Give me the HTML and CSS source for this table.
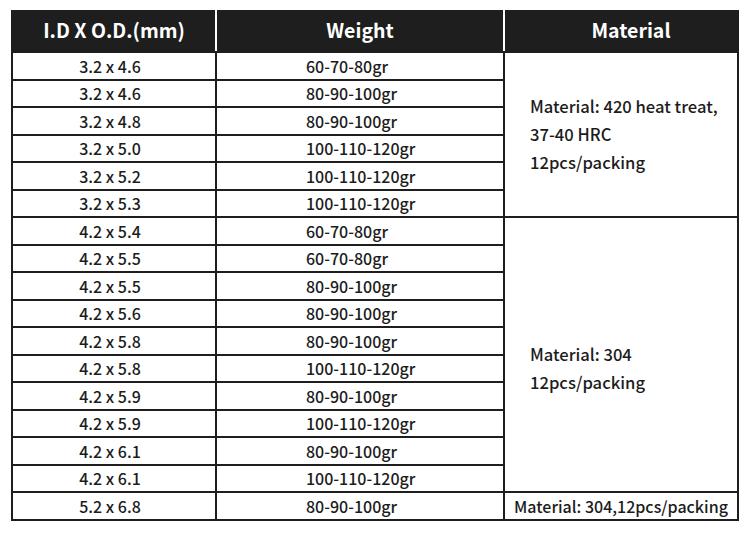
FILE: index.html
```html
<!DOCTYPE html>
<html lang="en">
  <head>
    <meta charset="utf-8" />
    <meta name="viewport" content="width=device-width,initial-scale=1" />
    <title>Sizes</title>
    <link rel="stylesheet" href="styles.css">
  </head>
  <body>
    <div class="sheet">
      <table class="spec">
        <thead>
          <tr>
            <th class="col-size">I.D X O.D.(mm)</th>
            <th class="col-weight">Weight</th>
            <th class="col-material">Material</th>
          </tr>
        </thead>
        <tbody>
          <tr>
            <td class="size">3.2 x 4.6</td>
            <td class="weight">60-70-80gr</td>
            <td class="material" rowspan="6">Material: 420 heat treat,<br>37-40 HRC<br>12pcs/packing</td>
          </tr>
          <tr><td class="size">3.2 x 4.6</td><td class="weight">80-90-100gr</td></tr>
          <tr><td class="size">3.2 x 4.8</td><td class="weight">80-90-100gr</td></tr>
          <tr><td class="size">3.2 x 5.0</td><td class="weight">100-110-120gr</td></tr>
          <tr><td class="size">3.2 x 5.2</td><td class="weight">100-110-120gr</td></tr>
          <tr><td class="size">3.2 x 5.3</td><td class="weight">100-110-120gr</td></tr>
          <tr>
            <td class="size">4.2 x 5.4</td>
            <td class="weight">60-70-80gr</td>
            <td class="material material-low" rowspan="10">Material: 304<br>12pcs/packing</td>
          </tr>
          <tr><td class="size">4.2 x 5.5</td><td class="weight">60-70-80gr</td></tr>
          <tr><td class="size">4.2 x 5.5</td><td class="weight">80-90-100gr</td></tr>
          <tr><td class="size">4.2 x 5.6</td><td class="weight">80-90-100gr</td></tr>
          <tr><td class="size">4.2 x 5.8</td><td class="weight">80-90-100gr</td></tr>
          <tr><td class="size">4.2 x 5.8</td><td class="weight">100-110-120gr</td></tr>
          <tr><td class="size">4.2 x 5.9</td><td class="weight">80-90-100gr</td></tr>
          <tr><td class="size">4.2 x 5.9</td><td class="weight">100-110-120gr</td></tr>
          <tr><td class="size">4.2 x 6.1</td><td class="weight">80-90-100gr</td></tr>
          <tr><td class="size">4.2 x 6.1</td><td class="weight">100-110-120gr</td></tr>
          <tr>
            <td class="size">5.2 x 6.8</td>
            <td class="weight">80-90-100gr</td>
            <td class="material-single">Material: 304,12pcs/packing</td>
          </tr>
        </tbody>
      </table>
    </div>
  </body>
</html>
```

FILE: styles.css
```css
body {
  margin: 0;
  background: #fff;
  font-family: "Noto Sans CJK SC", "Noto Sans", sans-serif;
  color: #1c1c1c;
}
.sheet {
  padding: 10px 11px;
}
.spec {
  width: 728px;
  border-collapse: collapse;
  table-layout: fixed;
}
.col-size {
  width: 202px;
}
.col-weight {
  width: 286px;
}
.spec th {
  height: 35px;
  padding: 0 0 4px;
  background: #1e1e1e;
  color: #fff;
  font-size: 19.5px;
  font-weight: 700;
  line-height: 24px;
  text-align: center;
  border: 2px solid #1e1e1e;
}
.spec th.col-size,
.spec th.col-weight {
  border-right-color: #fff;
}
.spec th.col-material {
  padding-left: 20px;
}
.spec td {
  height: 25.5px;
  padding: 0;
  font-size: 16px;
  font-weight: 500;
  line-height: 20px;
  border: 2px solid #1e1e1e;
  vertical-align: middle;
}
.size {
  text-align: center;
  padding-right: 8px !important;
}
.weight {
  text-align: left;
  padding-left: 89px !important;
}
.material {
  padding-left: 25px !important;
  font-size: 16.6px !important;
  line-height: 28px !important;
  padding-bottom: 2px !important;
}
.material-low {
  padding-top: 28px !important;
}
.material-single {
  text-align: center;
}
```
